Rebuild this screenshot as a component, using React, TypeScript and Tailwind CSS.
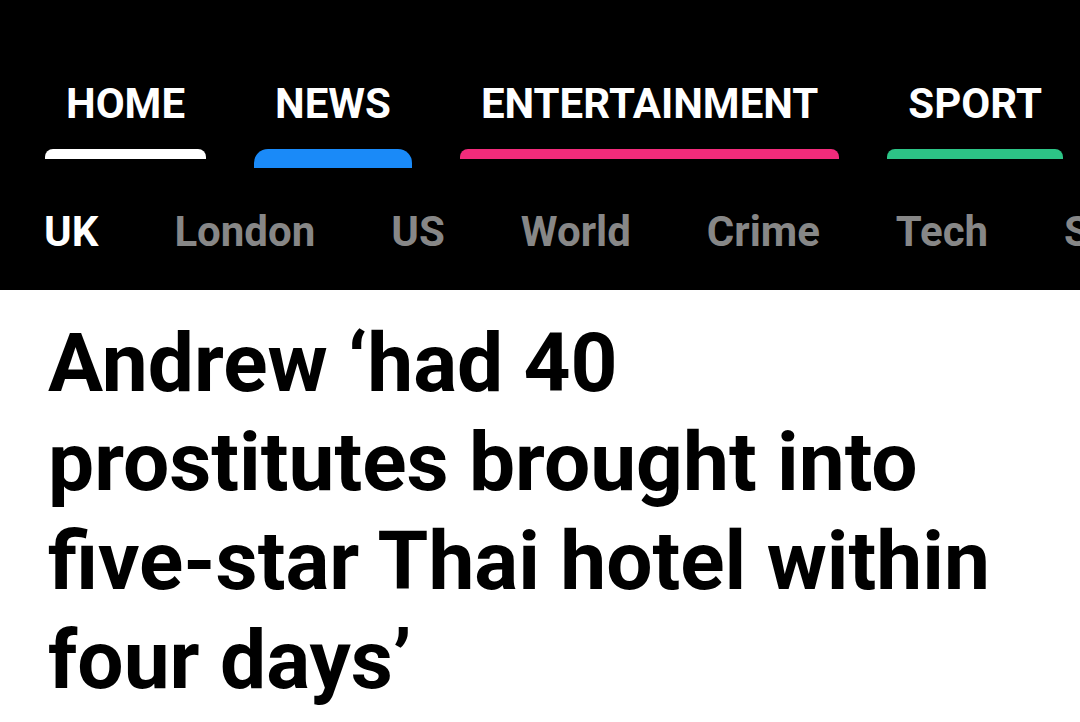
import React from 'react';

interface Section {
  label: string;
  color: string;
  active?: boolean;
}

const sections: Section[] = [
  { label: 'HOME', color: 'bg-white' },
  { label: 'NEWS', color: 'bg-[#1a8af8]', active: true },
  { label: 'ENTERTAINMENT', color: 'bg-[#f22b7b]' },
  { label: 'SPORT', color: 'bg-[#2cc486]' },
];

const subSections = ['UK', 'London', 'US', 'World', 'Crime', 'Tech', 'Showbiz'];

const App: React.FC = () => {
  return (
    <div className="min-h-screen w-full overflow-hidden bg-white font-['Roboto',sans-serif]">
      {/* Header: sections + sub nav */}
      <header className="h-[290px] overflow-hidden bg-black">
        <nav className="flex items-start gap-[48px] pl-[45px] pt-[80px]">
          {sections.map((s) => (
            <div key={s.label} className="flex shrink-0 flex-col">
              <span className="whitespace-nowrap px-[21px] text-[42px] font-bold leading-[48px] text-white">
                {s.label}
              </span>
              <span
                className={
                  s.active
                    ? `mt-[21px] h-[19px] rounded-t-[14px] ${s.color}`
                    : `mt-[21px] h-[10px] rounded-t-[8px] ${s.color}`
                }
              />
            </div>
          ))}
        </nav>
        <div className="mt-[40px] flex gap-[76px] whitespace-nowrap pl-[44px]">
          {subSections.map((item, i) => (
            <span
              key={item}
              className={
                i === 0
                  ? 'text-[42px] font-bold leading-[48px] text-white'
                  : 'text-[42px] font-bold leading-[48px] text-[#878787]'
              }
            >
              {item}
            </span>
          ))}
        </div>
      </header>

      {/* Headline */}
      <h1 className="pl-[48px] pr-[76px] pt-[24px] text-[82px] font-bold leading-[99px] text-black">
        Andrew ‘had 40 prostitutes brought into five-star Thai hotel within four days’
      </h1>
    </div>
  );
};

export default App;
